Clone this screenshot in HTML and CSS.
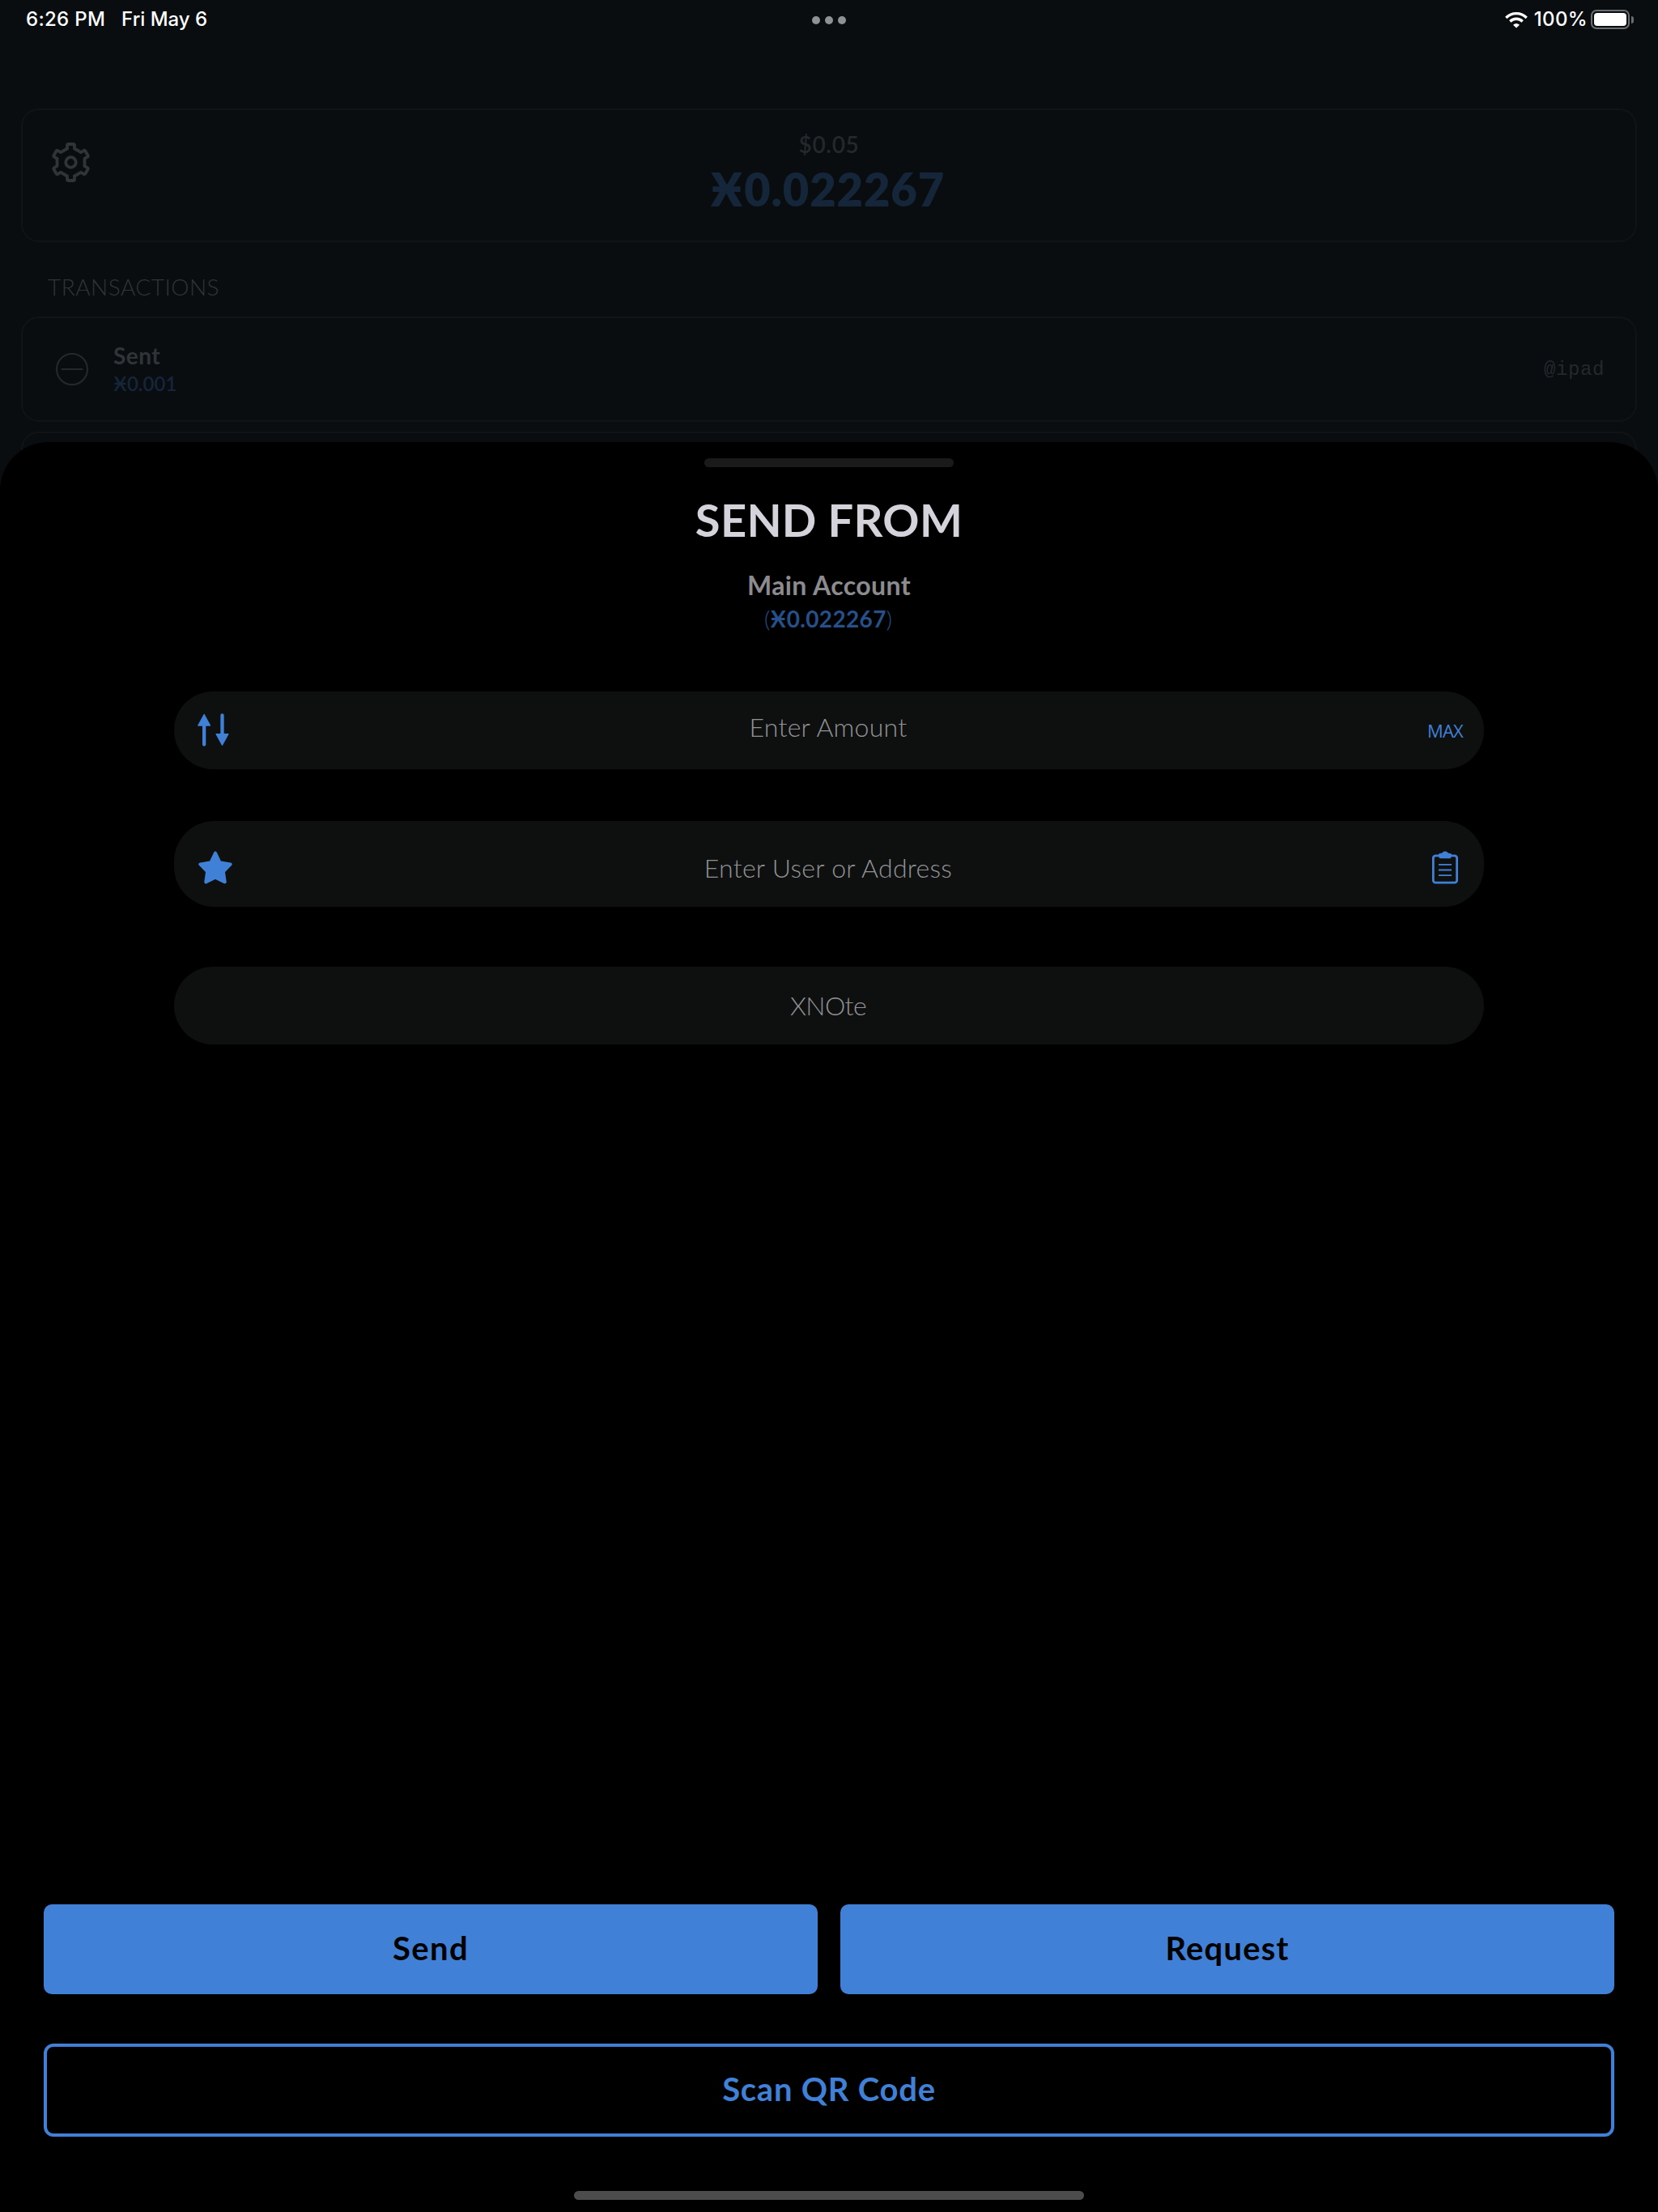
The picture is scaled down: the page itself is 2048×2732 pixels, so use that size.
FILE: index.html
```html
<!DOCTYPE html>
<html lang="en">
<head>
<meta charset="utf-8">
<title>Send From</title>
<link rel="stylesheet" href="styles.css">
</head>
<body>
<div class="screen">
  <header class="status">
    <div class="status-side">
      <span class="clock">6:26 PM</span>
      <span>Fri May 6</span>
    </div>
    <div class="dots"><i class="dot"></i><i class="dot"></i><i class="dot"></i></div>
    <div class="status-side status-right">
      <svg class="wifi" viewBox="0 0 84 62" fill="none" stroke="#fff" stroke-width="10">
        <path d="M4 23.500A53 53 0 0 1 80 23.500"/>
        <path d="M19 37A32 32 0 0 1 65 37"/>
        <path d="M42 61 30 49.500Q42 39.500 54 49.500Z" fill="#fff" stroke="none"/>
      </svg>
      <span class="percent">100%</span>
      <div class="battery"><div class="battery-fill"></div></div>
      <div class="battery-tip"></div>
    </div>
  </header>

  <main class="wallet">
    <section class="card balance">
      <svg class="gear" viewBox="-24.500 -24.500 49 49" fill="none" stroke="#303437" stroke-width="3.800" stroke-linejoin="round" stroke-linecap="round">
        <defs><path id="tooth" d="M-4.500-17v-3.900q0-1.600 1.600-1.600h5.800q1.600 0 1.600 1.600V-17L12.470-12.400"/></defs>
        <use href="#tooth"/>
        <use href="#tooth" transform="rotate(60)"/>
        <use href="#tooth" transform="rotate(120)"/>
        <use href="#tooth" transform="rotate(180)"/>
        <use href="#tooth" transform="rotate(240)"/>
        <use href="#tooth" transform="rotate(300)"/>
        <circle r="6.300"/>
      </svg>
      <div class="balance-text">
        <div class="fiat">$0.05</div>
        <div class="total">Ӿ0.022267</div>
      </div>
    </section>

    <h2 class="heading">TRANSACTIONS</h2>

    <section class="card entry">
      <svg class="minus" viewBox="0 0 40 40" fill="none" stroke="#25292b" stroke-width="2">
        <circle cx="20" cy="20" r="19"/>
        <path d="M7.500 20h25" stroke-linecap="round"/>
      </svg>
      <div class="entry-text">
        <div class="entry-kind">Sent</div>
        <div class="entry-amount">Ӿ0.001</div>
      </div>
      <div class="entry-peer">@ipad</div>
    </section>
    <section class="card entry"></section>
  </main>

  <section class="sheet">
    <div class="handle"></div>
    <h1 class="title">SEND FROM</h1>
    <div class="account">Main Account</div>
    <div class="account-balance"><span class="paren">(</span>Ӿ0.022267<span class="paren">)</span></div>

    <div class="field amount">
      <svg class="swap" viewBox="0 0 117 122" fill="#4180d7" stroke="#4180d7" stroke-linejoin="round" stroke-linecap="round">
        <path d="M24.500 40v75M91.500 7v70" stroke-width="13"/>
        <path d="M24.500 4 46.500 44.500H2.500ZM91.500 117 69.500 76.500H113.500Z" stroke-width="4"/>
      </svg>
      <span class="placeholder">Enter Amount</span>
      <span class="max">MAX</span>
    </div>

    <div class="field recipient">
      <svg class="star" viewBox="0 0 127 122" fill="#4180d7" stroke="#4180d7" stroke-width="12" stroke-linejoin="round">
        <path d="M63.500 7 80 42 120 48.500 93.500 76 99 115 63.500 98 28 115 33.500 76 7 48.500 47 42Z"/>
      </svg>
      <span class="placeholder">Enter User or Address</span>
      <svg class="clipboard" viewBox="0 0 96 122" fill="none" stroke="#4180d7">
        <rect x="4" y="17" width="88" height="100" rx="9" stroke-width="8.500"/>
        <path d="M24 50H72M24 70H72M24 90H72" stroke-width="5.500"/>
        <path d="M24 12q1-3 5-3.500 7-.5 10-4 3.500-3.500 9-3.500t9 3.500q3 3.500 10 4 4 .5 5 3.500v6q-1 9-9 9.500H33q-8-.5-9-9.500Z" fill="#4180d7" stroke="none"/>
      </svg>
    </div>

    <div class="field note"><span class="placeholder">XNOte</span></div>

    <div class="actions">
      <div class="button send">Send</div>
      <div class="button request">Request</div>
    </div>
    <div class="button scan">Scan QR Code</div>
    <div class="home"></div>
  </section>
</div>
</body>
</html>
```

FILE: styles.css
```css
* { box-sizing: border-box; }

body {
  margin: 0;
  background: #000;
  font-family: Lato, "Open Sans", "Noto Sans", sans-serif;
}

h1, h2 { margin: 0; }
svg { display: block; flex: none; }

.screen {
  position: relative;
  width: 2048px;
  height: 2732px;
  overflow: hidden;
  background: #090d10;
}

/* Status bar */
.status {
  display: grid;
  grid-template-columns: 1fr auto 1fr;
  height: 48px;
  padding: 0 30px 0 32px;
  color: #fff;
  font: 500 24px/48px Inter, sans-serif;
}
.status-side { display: flex; align-items: center; gap: 20px; }
.clock { letter-spacing: .3px; }
.dots { display: flex; gap: 6px; align-items: center; margin-left: -2px; padding-top: 2px; }
.dot { width: 10px; height: 10px; border-radius: 50%; background: #8f9295; }
.status-right { justify-content: flex-end; gap: 0; }
.wifi { width: 28px; height: 21px; margin-right: 8px; }
.percent { letter-spacing: .35px; margin-right: 4px; }
.battery {
  width: 48px;
  height: 24px;
  padding: 2px;
  border: 2px solid #6b6e70;
  border-radius: 7px;
}
.battery-fill { height: 16px; border-radius: 4px; background: #fff; }
.battery-tip {
  width: 3px;
  height: 9px;
  margin-left: 2px;
  border-radius: 0 4px 4px 0;
  background: #6b6e70;
}

/* Dimmed wallet behind the sheet */
.wallet { padding: 86px 26px 0; }
.card { border: 2px solid #101417; border-radius: 22px; }
.balance {
  display: grid;
  grid-template-columns: 49px 1fr 49px;
  height: 165px;
  padding: 24px 36px 0;
}
.gear { width: 49px; height: 49px; margin: 16px 0 0 -1px; }
.balance-text { text-align: center; }
.fiat { color: #24282a; font-size: 28px; font-weight: 600; line-height: 36px; letter-spacing: .65px; }
.total { margin: 4px 4px 0 0; color: #15263a; font-size: 56px; font-weight: 800; line-height: 68px; letter-spacing: .9px; }
.heading {
  margin: 37px 0 19px 33px;
  color: #303436;
  font-size: 28px;
  font-weight: 300;
  line-height: 36px;
  letter-spacing: .5px;
}
.entry {
  display: flex;
  align-items: center;
  height: 130px;
  margin-bottom: 12px;
  padding: 0 38px 0 41px;
}
.minus { width: 40px; height: 40px; }
.entry-text { flex: 1; margin-left: 31px; }
.entry-kind { color: #303437; font-size: 28px; font-weight: 700; line-height: 36px; letter-spacing: .5px; }
.entry-amount { color: #15263a; font-size: 24px; font-weight: 600; line-height: 34px; }
.entry-peer { padding-top: 2px; color: #25282b; font: 24px/36px "Liberation Mono", monospace; letter-spacing: .6px; }

/* Send sheet */
.sheet {
  position: absolute;
  inset: 546px 0 0;
  display: flex;
  flex-direction: column;
  align-items: center;
  padding: 20px 54px 15px;
  border-radius: 60px 60px 0 0;
  background: #000;
}
.handle { width: 308px; height: 11px; border-radius: 6px; background: #1a1a1a; }
.title { margin-top: 31px; color: #d4d3dc; font-size: 56px; font-weight: 700; line-height: 68px; letter-spacing: .3px; }
.account { margin-top: 27px; color: #8c8b8f; font-size: 32px; font-weight: 700; line-height: 40px; letter-spacing: .42px; }
.account-balance { margin: 3px 2px 0 0; color: #255089; font-size: 28px; font-weight: 700; line-height: 36px; letter-spacing: .35px; }
.paren { font-weight: 300; letter-spacing: 0; }

.field {
  display: grid;
  grid-template-columns: 60px 1fr 60px;
  align-items: center;
  width: 1618px;
  height: 96px;
  padding: 0 26px 0 29px;
  border-radius: 50px;
  background: #0e100f;
}
.placeholder {
  grid-column: 2;
  padding-right: 5px;
  color: #929296;
  font-size: 32px;
  font-weight: 300;
  line-height: 40px;
  letter-spacing: .28px;
  text-align: center;
}
.amount { margin-top: 72px; }
.amount .placeholder { padding-bottom: 8px; }
.swap { width: 39px; height: 41px; margin-bottom: 1px; }
.max { color: #4180d7; font: 400 22px/30px "Open Sans", sans-serif; letter-spacing: -.8px; text-align: right; }
.recipient { height: 106px; margin-top: 64px; padding-top: 10px; }
.star { width: 42px; height: 41px; margin: 0 0 1px .5px; }
.clipboard { width: 32px; height: 41px; margin: 0 0 1px 22px; }
.note { margin-top: 74px; }
.note .placeholder { letter-spacing: -.55px; }

.actions {
  display: grid;
  grid-template-columns: 1fr 1fr;
  gap: 28px;
  width: 100%;
  margin-top: auto;
}
.button {
  height: 111px;
  border-radius: 10px;
  background: #4180d7;
  color: #000;
  font-size: 40px;
  font-weight: 700;
  line-height: 108px;
  text-align: center;
}
.send { letter-spacing: 1.4px; }
.request { letter-spacing: 1.18px; }
.scan {
  width: 100%;
  height: 115px;
  margin: 61px 0 67px;
  border: 4px solid #4180d7;
  border-radius: 12px;
  background: none;
  color: #4180d7;
  line-height: 104px;
  letter-spacing: .75px;
}
.home { width: 630px; height: 11px; border-radius: 6px; background: #4c4c4c; }
```
